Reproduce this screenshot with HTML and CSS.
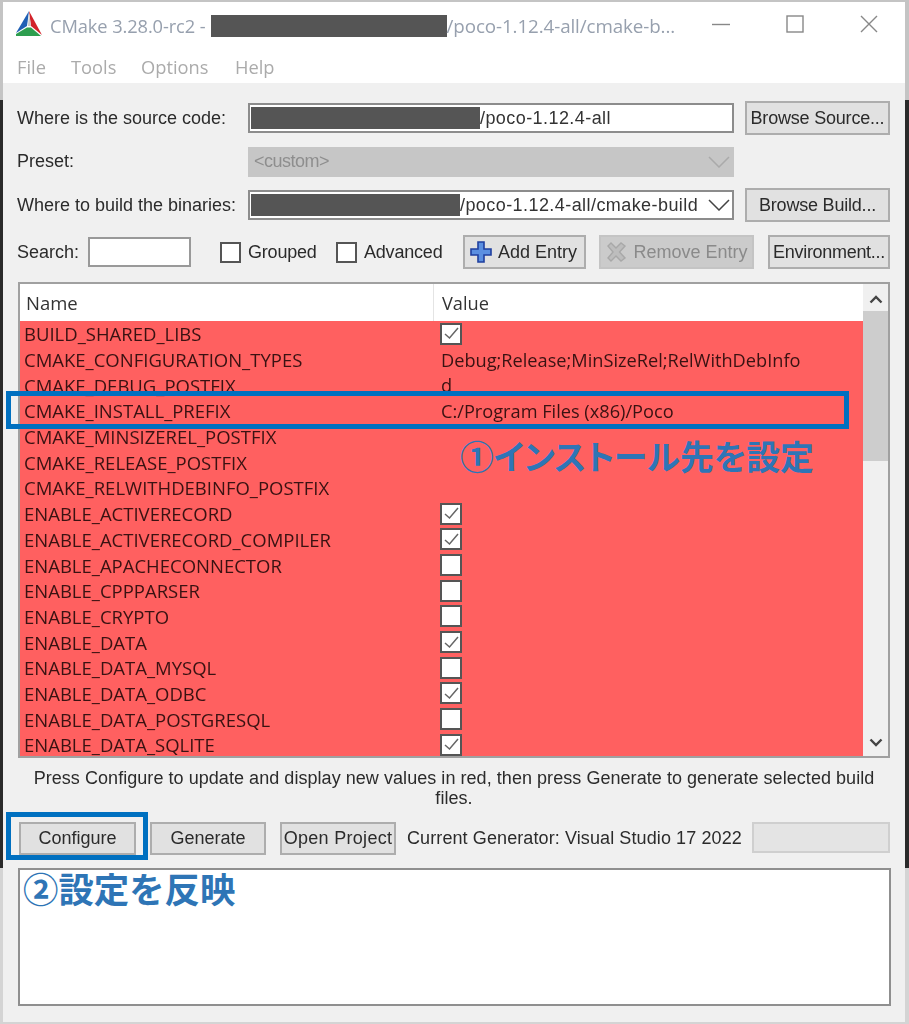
FILE: index.html
```html
<!DOCTYPE html>
<html lang="ja">
<head>
<meta charset="utf-8">
<title>CMake</title>
<link rel="stylesheet" href="styles.css">
</head>
<body>
<div class="desktop">
  <div class="window">
    <header class="titlebar">
      <svg class="logo" width="26" height="26" viewBox="0 0 26 26">
        <polygon points="13,0 0,22 11,15" fill="#1f5fb4"/>
        <polygon points="13,0 26,24 15,15" fill="#d2232a"/>
        <polygon points="0,23 11,16.5 15,16.5 25,25 0,25" fill="#2e9e4f"/>
        <polygon points="13,2 12,15 15,15" fill="#c9c9c9"/>
      </svg>
      <span class="title">CMake 3.28.0-rc2 -</span>
      <span class="redact title-redact"></span>
      <span class="title title-path">/poco-1.12.4-all/cmake-b...</span>
      <div class="controls">
        <svg width="18" height="18" viewBox="0 0 18 18"><path d="M0 9.5H18" stroke="#888" stroke-width="1.4"/></svg>
        <svg width="18" height="18" viewBox="0 0 18 18"><rect x="1" y="1" width="16" height="16" fill="none" stroke="#888" stroke-width="1.4"/></svg>
        <svg width="18" height="18" viewBox="0 0 18 18"><path d="M1 1L17 17M17 1L1 17" stroke="#888" stroke-width="1.4"/></svg>
      </div>
    </header>
    <nav class="menubar">
      <span class="menu-file">File</span>
      <span class="menu-tools">Tools</span>
      <span class="menu-options">Options</span>
      <span>Help</span>
    </nav>
    <main class="content">
      <div class="form">
        <label>Where is the source code:</label>
        <div class="field"><span class="redact field-redact-a"></span><span>/poco-1.12.4-all</span></div>
        <button class="btn">Browse Source...</button>
        <label>Preset:</label>
        <div class="field disabled"><span>&lt;custom&gt;</span><svg class="chev" width="22" height="12" viewBox="0 0 22 12"><path d="M1 1L11 11L21 1" fill="none" stroke="#aaa" stroke-width="1.5"/></svg></div>
        <span></span>
        <label>Where to build the binaries:</label>
        <div class="field"><span class="redact field-redact-b"></span><span>/poco-1.12.4-all/cmake-build</span><svg class="chev" width="22" height="12" viewBox="0 0 22 12"><path d="M1 1L11 11L21 1" fill="none" stroke="#444" stroke-width="1.5"/></svg></div>
        <button class="btn">Browse Build...</button>
      </div>
      <div class="search-row">
        <label class="search-label">Search:</label>
        <div class="search-input"></div>
        <span class="cb"></span><span class="cb-label grouped-label">Grouped</span>
        <span class="cb"></span><span class="cb-label advanced-label">Advanced</span>
        <button class="btn add">
          <svg width="22" height="22" viewBox="0 0 22 22"><path d="M8 1H14V8H21V14H14V21H8V14H1V8H8Z" fill="#5b8fe0" stroke="#1f3f9f" stroke-width="1.6"/></svg>
          <span>Add Entry</span>
        </button>
        <button class="btn remove">
          <svg width="22" height="22" viewBox="0 0 22 22"><path d="M3 5L6 2L11 7L16 2L20 5L14.500 11L20 17L16 20L11 15L6 20L3 17L8 11Z" fill="#bdbdbd" stroke="#a8a8a8" stroke-width="1.4"/></svg>
          <span>Remove Entry</span>
        </button>
        <button class="btn env">Environment...</button>
      </div>
      <section class="table">
        <div class="table-main">
          <div class="thead"><div class="cell-name">Name</div><div class="cell-value">Value</div></div>
          <div class="tbody">
            <div class="row"><div class="cell-name">BUILD_SHARED_LIBS</div><div class="cell-value"><span class="cb on"><svg width="15" height="13" viewBox="0 0 15 13"><path d="M1 7L5.500 11L14 1" fill="none" stroke="#666" stroke-width="1.500"/></svg></span></div></div>
            <div class="row"><div class="cell-name">CMAKE_CONFIGURATION_TYPES</div><div class="cell-value">Debug;Release;MinSizeRel;RelWithDebInfo</div></div>
            <div class="row"><div class="cell-name">CMAKE_DEBUG_POSTFIX</div><div class="cell-value">d</div></div>
            <div class="row"><div class="cell-name">CMAKE_INSTALL_PREFIX</div><div class="cell-value">C:/Program Files (x86)/Poco</div></div>
            <div class="row"><div class="cell-name">CMAKE_MINSIZEREL_POSTFIX</div><div class="cell-value"></div></div>
            <div class="row"><div class="cell-name">CMAKE_RELEASE_POSTFIX</div><div class="cell-value"></div></div>
            <div class="row"><div class="cell-name">CMAKE_RELWITHDEBINFO_POSTFIX</div><div class="cell-value"></div></div>
            <div class="row"><div class="cell-name">ENABLE_ACTIVERECORD</div><div class="cell-value"><span class="cb on"><svg width="15" height="13" viewBox="0 0 15 13"><path d="M1 7L5.500 11L14 1" fill="none" stroke="#666" stroke-width="1.500"/></svg></span></div></div>
            <div class="row"><div class="cell-name">ENABLE_ACTIVERECORD_COMPILER</div><div class="cell-value"><span class="cb on"><svg width="15" height="13" viewBox="0 0 15 13"><path d="M1 7L5.500 11L14 1" fill="none" stroke="#666" stroke-width="1.500"/></svg></span></div></div>
            <div class="row"><div class="cell-name">ENABLE_APACHECONNECTOR</div><div class="cell-value"><span class="cb on"></span></div></div>
            <div class="row"><div class="cell-name">ENABLE_CPPPARSER</div><div class="cell-value"><span class="cb on"></span></div></div>
            <div class="row"><div class="cell-name">ENABLE_CRYPTO</div><div class="cell-value"><span class="cb on"></span></div></div>
            <div class="row"><div class="cell-name">ENABLE_DATA</div><div class="cell-value"><span class="cb on"><svg width="15" height="13" viewBox="0 0 15 13"><path d="M1 7L5.500 11L14 1" fill="none" stroke="#666" stroke-width="1.500"/></svg></span></div></div>
            <div class="row"><div class="cell-name">ENABLE_DATA_MYSQL</div><div class="cell-value"><span class="cb on"></span></div></div>
            <div class="row"><div class="cell-name">ENABLE_DATA_ODBC</div><div class="cell-value"><span class="cb on"><svg width="15" height="13" viewBox="0 0 15 13"><path d="M1 7L5.500 11L14 1" fill="none" stroke="#666" stroke-width="1.500"/></svg></span></div></div>
            <div class="row"><div class="cell-name">ENABLE_DATA_POSTGRESQL</div><div class="cell-value"><span class="cb on"></span></div></div>
            <div class="row"><div class="cell-name">ENABLE_DATA_SQLITE</div><div class="cell-value"><span class="cb on"><svg width="15" height="13" viewBox="0 0 15 13"><path d="M1 7L5.500 11L14 1" fill="none" stroke="#666" stroke-width="1.500"/></svg></span></div></div>
          </div>
        </div>
        <div class="scrollbar">
          <svg width="14" height="9" viewBox="0 0 14 9"><path d="M1.500 7.500L7 2L12.500 7.500" fill="none" stroke="#444" stroke-width="2.400"/></svg>
          <div class="thumb"></div>
          <svg class="down" width="14" height="9" viewBox="0 0 14 9"><path d="M1.500 1.500L7 7L12.500 1.500" fill="none" stroke="#444" stroke-width="2.400"/></svg>
        </div>
      </section>
      <p class="message">Press Configure to update and display new values in red, then press Generate to generate selected build<br>files.</p>
      <div class="actions">
        <button class="btn act">Configure</button>
        <button class="btn act">Generate</button>
        <button class="btn act open">Open Project</button>
        <span class="generator">Current Generator: Visual Studio 17 2022</span>
        <div class="progress"></div>
      </div>
      <div class="log"></div>
    </main>
  </div>
  <div class="mark mark-prefix"></div>
  <div class="mark mark-configure"></div>
  <div class="note note-one">①インストール先を設定</div>
  <div class="note note-two">②設定を反映</div>
</div>
</body>
</html>
```
FILE: styles.css
```css
* { box-sizing: border-box; }
html, body { margin: 0; padding: 0; }
body { width: 909px; height: 1024px; overflow: hidden; font-family: "Liberation Sans", Arial, sans-serif; }

.desktop {
  position: relative;
  width: 909px;
  height: 1024px;
  padding: 2px 4px 2px 3px;
  background: linear-gradient(#c4c4c4 0 100px, #2a2a2a 100px 868px, #d4d4d4 868px);
}
.window { height: 1020px; background: #f0f0f0; display: flex; flex-direction: column; filter: blur(0.35px); }

.titlebar { height: 40px; background: #fff; display: flex; align-items: center; padding: 7px 0 0 13px; flex: none; }
.logo { flex: none; margin-right: 8px; margin-top: -3px; }
.title { font-family: "Open Sans", sans-serif; font-size: 18.300px; color: #97a0ae; white-space: nowrap; letter-spacing: -0.1px; }
.title-path { font-size: 18.800px; }
.redact { display: inline-block; background: #555; flex: none; }
.title-redact { width: 236px; height: 22px; margin: 0 0 0 5px; }
.controls { margin-left: auto; display: flex; gap: 56px; padding-right: 27px; margin-top: -4px; }

.menubar { height: 41px; background: #fff; display: flex; align-items: center; padding: 8px 0 0 14px; color: #ababab; font-family: "Open Sans", sans-serif; font-size: 18.300px; flex: none; }
.menu-file { width: 54px; }
.menu-tools { width: 70px; }
.menu-options { width: 94px; }

.content { flex: 1; padding: 18px 15px 0 14px; font-size: 18px; color: #2b2b2b; min-height: 0; }

.form { display: grid; grid-template-columns: 220px 486px 145px; column-gap: 11px; row-gap: 9.5px; grid-auto-rows: 34px; align-items: center; }
.form label { white-space: nowrap; }
.form .btn { letter-spacing: -0.2px; }
.field { height: 30px; border: 2px solid #8c8c8c; background: #fff; display: flex; align-items: center; white-space: nowrap; color: #333; letter-spacing: 0.43px; }
.field.disabled { background: #c6c6c6; border-color: #c6c6c6; color: #8e8e8e; padding-left: 4px; letter-spacing: -0.5px; }
.field-redact-a { width: 229px; height: 22px; margin-left: 1px; }
.field-redact-b { width: 209px; height: 22px; margin-left: 1px; }
.chev { margin-left: auto; margin-right: 2px; flex: none; }

.btn { height: 34px; padding: 0; background: #e1e1e1; border: 2px solid #adadad; font: inherit; color: #2b2b2b; white-space: nowrap; display: flex; align-items: center; justify-content: center; }

.search-row { display: flex; align-items: center; height: 34px; margin-top: 13px; }
.search-label { width: 71px; }
.search-input { width: 103px; height: 30px; background: #fff; border: 2px solid #999; margin-right: 29px; }
.cb { display: inline-flex; align-items: center; justify-content: center; width: 21px; height: 21px; background: #fff; border: 2px solid #555; flex: none; }
.cb-label { margin-left: 7px; letter-spacing: -0.2px; }
.grouped-label { width: 88px; }
.advanced-label { width: 99px; }
.add { width: 123px; gap: 6px; padding-right: 2px; }
.remove { width: 155px; margin-left: 13px; gap: 6px; background: #cbcbcb; border-color: #c4c4c4; color: #8a8a8a; }
.env { width: 122px; margin-left: 14px; letter-spacing: -0.3px; }

.table { display: flex; height: 476px; margin-top: 13px; margin-left: 1px; width: 872px; border: 2px solid #a0a0a0; background: #fff; overflow: hidden; font-family: "Open Sans", sans-serif; font-size: 18.500px; }
.table-main { width: 843px; flex: none; }
.thead { display: flex; height: 37px; align-items: center; background: #fff; color: #333; }
.thead .cell-name { padding-left: 6px; border-right: 1px solid #e4e4e4; height: 100%; display: flex; align-items: center; }
.thead .cell-value { padding-left: 8px; }
.cell-name { width: 414px; flex: none; padding-left: 4px; white-space: nowrap; }
.cell-value { padding-left: 7px; white-space: nowrap; font-size: 18.200px; display: flex; align-items: center; }
.tbody { background: #ff6060; height: 437px; overflow: hidden; }
.row { display: flex; height: 25.69px; align-items: center; color: #3a1212; }
.cb.on { width: 22px; height: 22px; margin-left: -1px; border-color: #555; }

.scrollbar { flex: 1; background: #f0f0f0; display: flex; flex-direction: column; align-items: center; padding-top: 11px; }
.thumb { width: 100%; height: 150px; background: #cdcdcd; margin-top: 7px; }
.down { margin-top: auto; margin-bottom: 9px; }

.message { margin: 10px 0 0; height: 45px; line-height: 20px; text-align: center; width: 874px; letter-spacing: 0.05px; }

.actions { display: flex; align-items: center; margin-top: 9px; height: 33px; padding-left: 2px; }
.act { width: 117px; height: 33px; margin-right: 14px; flex: none; }
.act:nth-child(2) { width: 116px; }
.act.open { width: 116px; margin-right: 11px; letter-spacing: 0.3px; }
.generator { width: 346px; white-space: nowrap; letter-spacing: 0.1px; }
.progress { width: 139px; height: 31px; background: #e4e4e4; border: 2px solid #cfcfcf; margin-top: -2px; }

.log { height: 138px; margin-top: 13px; margin-left: 1px; width: 873px; background: #fff; border: 2px solid #8f8f8f; }

.mark { position: absolute; border: 5px solid #0070c0; }
.mark-prefix { left: 6px; top: 391px; width: 843px; height: 38px; }
.mark-configure { left: 6px; top: 812px; width: 142px; height: 48px; }
.note { position: absolute; font-family: "Noto Sans CJK JP", sans-serif; font-weight: 700; font-size: 33.800px; line-height: 44px; color: #2e75b6; white-space: nowrap; font-feature-settings: "palt"; }
.note-one { left: 460px; top: 434px; }
.note-two { left: 23px; top: 866px; font-size: 35.400px; font-feature-settings: normal; }
```
